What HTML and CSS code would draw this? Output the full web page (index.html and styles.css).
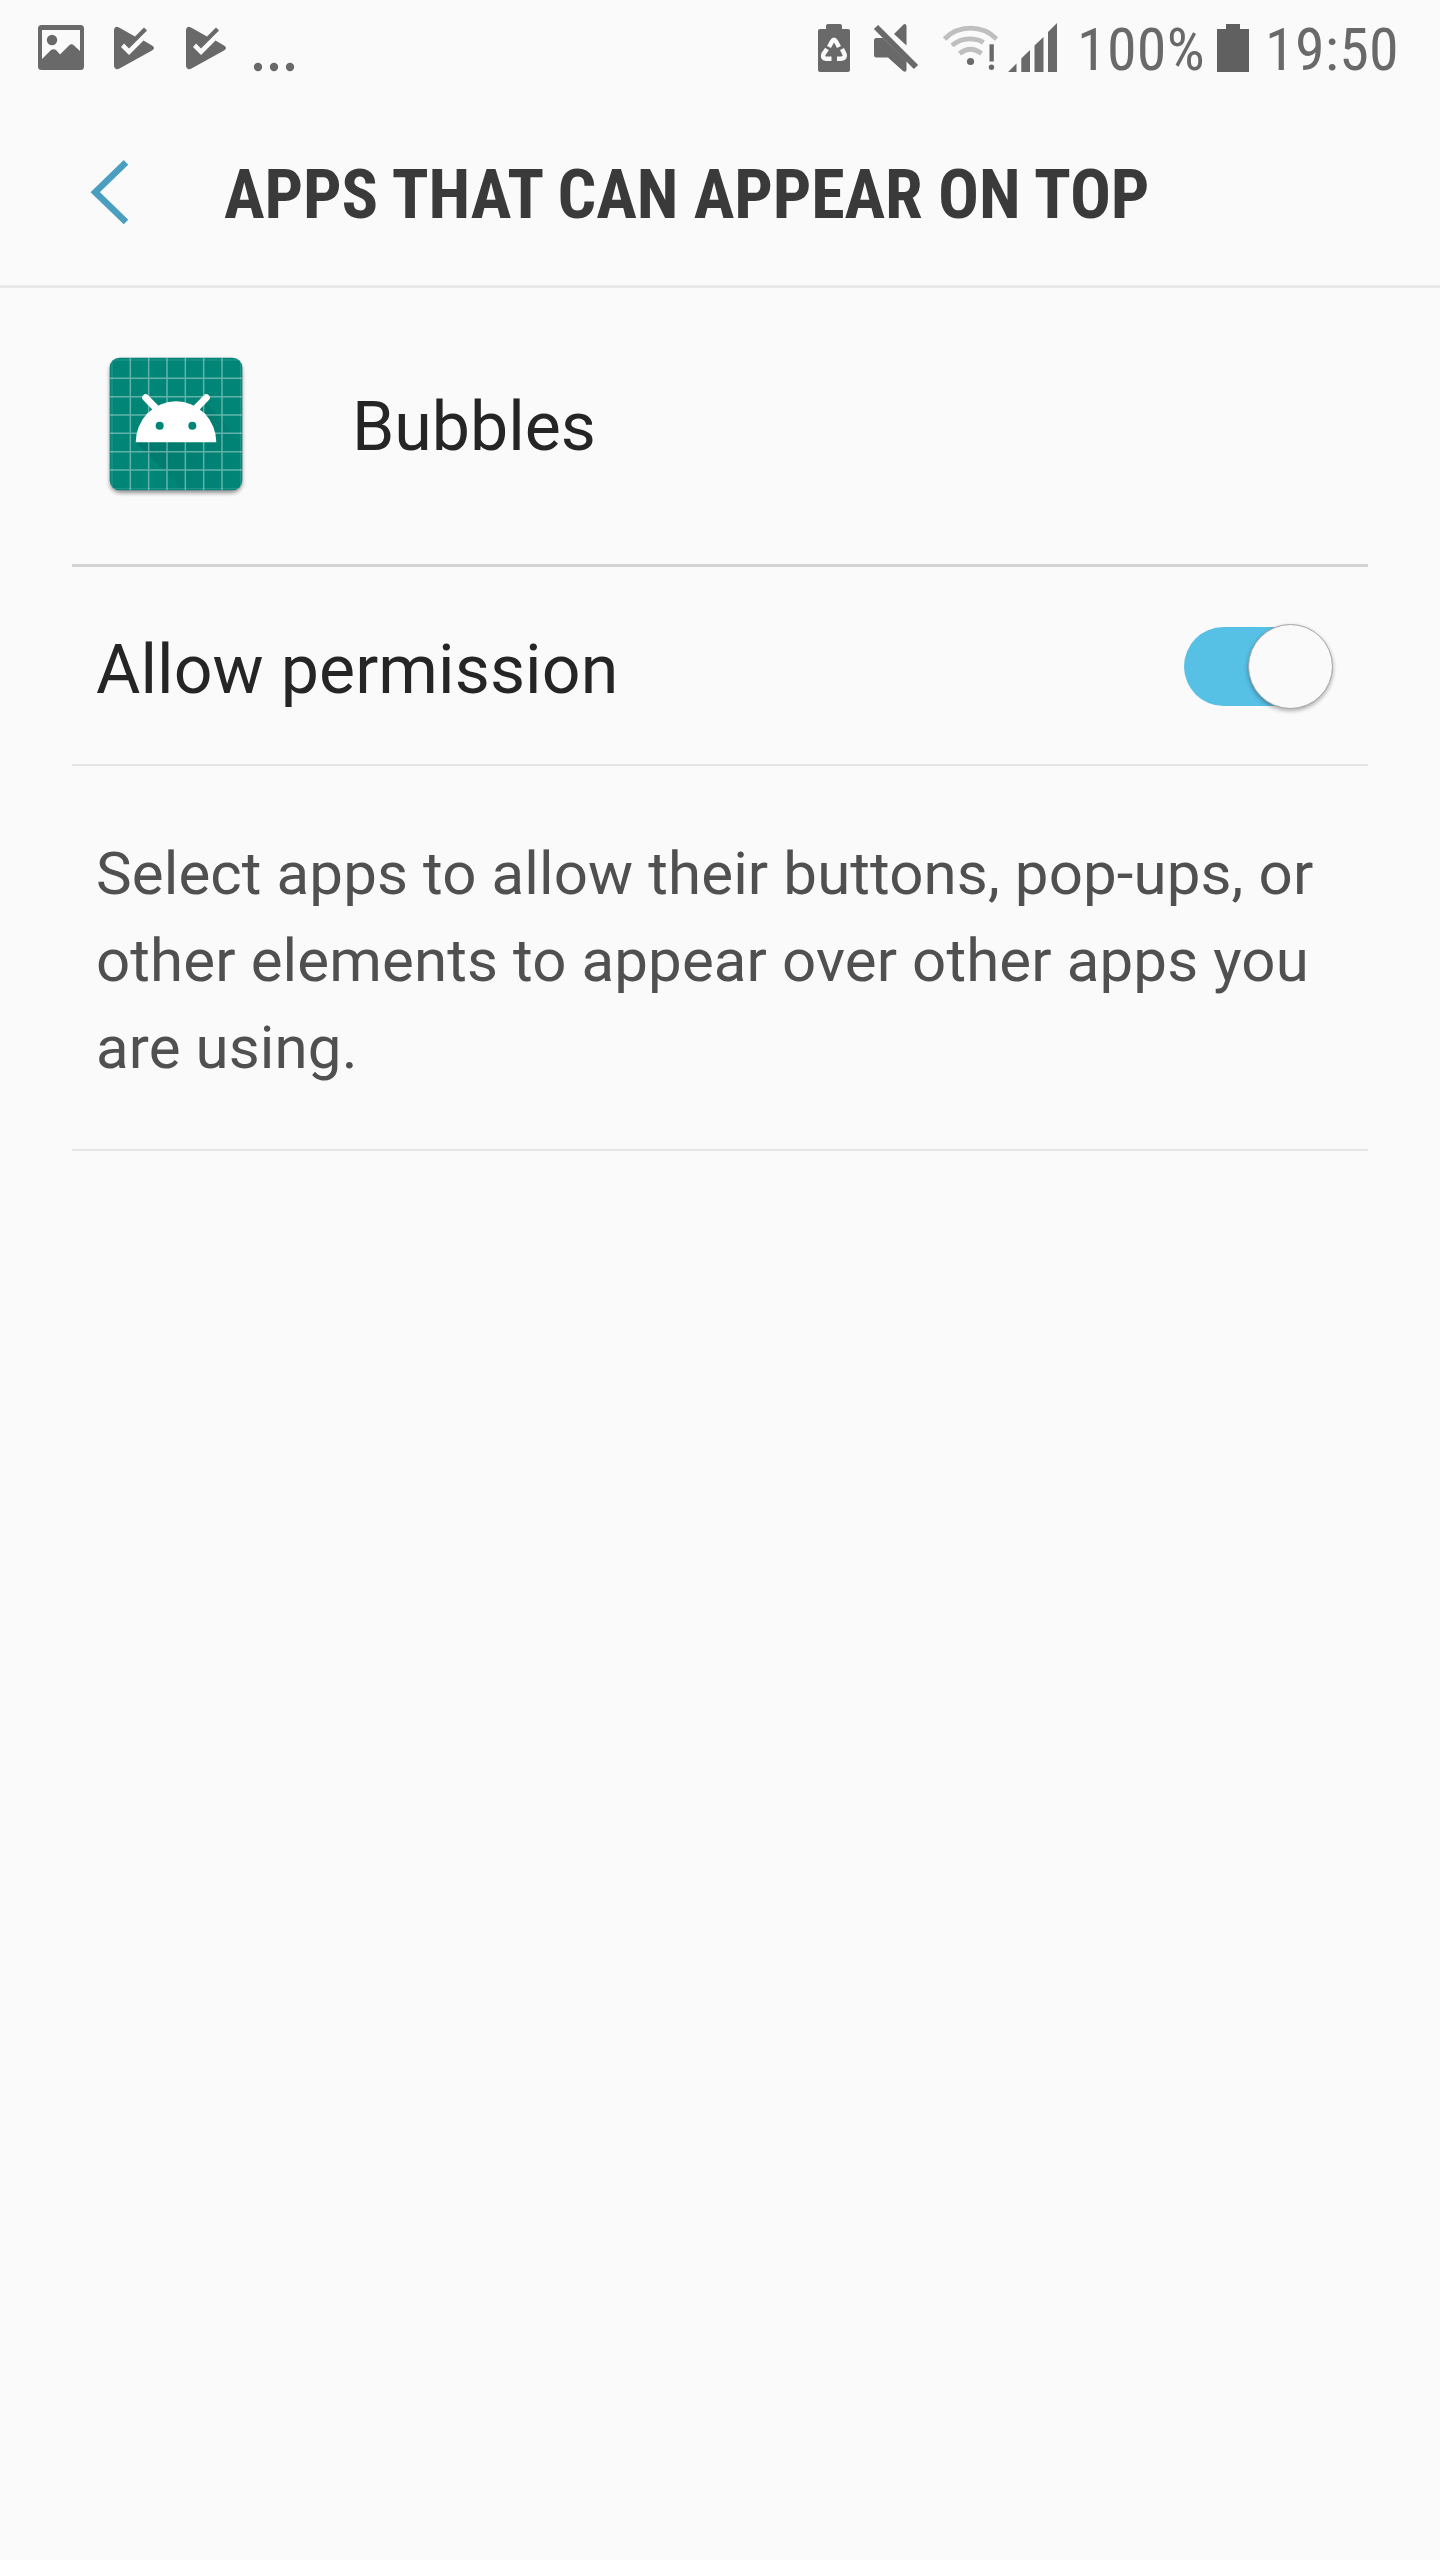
FILE: index.html
```html
<!DOCTYPE html>
<html lang="en">
<head>
<meta charset="utf-8">
<title>Apps that can appear on top</title>
<link rel="stylesheet" href="styles.css">
</head>
<body>
<div class="status-bar">
  <svg class="notifications" width="300" height="96" viewBox="0 0 300 96" fill="#696969">
    <path fill-rule="evenodd" d="M41.5 25H80.500a3.500 3.500 0 0 1 3.500 3.500V66.500a3.500 3.500 0 0 1-3.500 3.500H41.500a3.500 3.500 0 0 1-3.500-3.500V28.500a3.500 3.500 0 0 1 3.500-3.500ZM42 30V59L50.500 50.500Q53.500 48 56.500 50.500L60 54.500L69 45.500Q71.500 43 74 45.500L80 51V30Z"/>
    <circle cx="52" cy="40" r="5.200"/>
    <g id="store">
      <path d="M114 29.500Q115 25.500 119 27.500L135 36.500L144 27.500L147 30.500L129 48.500L124 43.500L121 47L129 55L143.500 40.500L152 45.500Q156 48 152 50.500L119.500 68.500Q115 70.500 114 66.500Z"/>
    </g>
    <use href="#store" x="72"/>
    <circle cx="258" cy="67" r="4.200"/><circle cx="274" cy="67" r="4.200"/><circle cx="290" cy="67" r="4.200"/>
  </svg>
  <div class="system">
    <svg width="261" height="96" viewBox="818 0 261 96" fill="#696969">
      <path d="M826 29V26Q826 24 828 24H840Q842 24 842 26V29H848Q850 29 850 31V70Q850 72 848 72H820Q818 72 818 70V31Q818 29 820 29Z"/>
      <g fill="none" stroke="#fafafa" stroke-width="4.500">
        <path d="M829 47L832 41.500Q834 38 836 41.500L839 47"/>
        <path d="M842 49L844.500 54Q846 58.500 841 58.700H837"/>
        <path d="M831.500 58.700H826Q822 58.500 823.500 54L827 49"/>
      </g>
      <path d="M894 34L903.500 24.500Q906 23 906.500 26V45.500ZM876 38H883L906.500 61V70Q906 73 903 71L888 57.500H876.500Q874 57.500 874 55V41Q874 38 876 38Z"/>
      <path d="M876 27L916 67" stroke="#696969" stroke-width="6"/>
      <g fill="none" stroke="#bfbfbf" stroke-width="4.800">
        <path d="M944.500 39Q955 28.200 970.500 28.200T996.500 39"/>
        <path d="M952 45.500Q960 38.800 969 38.800T983.500 42.500"/>
        <path d="M959.500 53.500Q970.500 45 981.500 53.500"/>
      </g>
      <circle cx="970.500" cy="61.500" r="3.600"/>
      <path d="M989.500 44.300H993.800V61.500H989.500Z"/><circle cx="991.500" cy="67.300" r="2.700"/>
      <path d="M1008 72L1016.500 63.500V72ZM1021.300 72V58.500L1030 50V72ZM1034.500 72V45.500L1043.500 37V72ZM1048 72V32L1057 23V72Z"/>
    </svg>
    <span class="percent">100%</span>
    <svg class="battery" width="32" height="96" viewBox="0 0 32 96" fill="#606060"><path d="M9 29V24H23V29H32V72H0V29Z"/></svg>
    <span class="clock">19:50</span>
  </div>
</div>
<header class="app-bar">
  <svg class="back" width="42" height="68" viewBox="0 0 42 68" fill="none" stroke="#4a9fc0" stroke-width="6.500"><path d="M36 4.300L5.200 34.200L36 64"/></svg>
  <h1>APPS THAT CAN APPEAR ON TOP</h1>
</header>
<main>
  <section class="app">
    <svg class="app-icon" width="170" height="170" viewBox="0 0 510 510">
      <defs>
        <clipPath id="tile"><rect x="59" y="53" width="398" height="398" rx="30"/></clipPath>
        <linearGradient id="shade" x1="140" y1="250" x2="400" y2="450" gradientUnits="userSpaceOnUse"><stop offset="0" stop-opacity=".11"/><stop offset="1" stop-opacity="0"/></linearGradient>
        <filter id="soft" x="-10%" y="-10%" width="120%" height="120%"><feGaussianBlur stdDeviation="6"/></filter>
      </defs>
      <rect x="60" y="60" width="396" height="399" rx="30" opacity=".42" filter="url(#soft)"/>
      <rect x="59" y="53" width="398" height="398" rx="30" fill="#008577"/>
      <g clip-path="url(#tile)">
        <path d="M137 307L281 451H457V310L350 190Z" fill="url(#shade)"/>
        <path d="M121 53V451M176 53V451M231 53V451M286 53V451M341 53V451M396 53V451M59 115H457M59 170H457M59 225H457M59 280H457M59 335H457M59 390H457" stroke="#fff" stroke-width="4.500" opacity=".38"/>
        <path d="M59 60H457M59 446H457M66 53V451M452 53V451" stroke="#fff" stroke-width="3" opacity=".15"/>
      </g>
      <path d="M137 307A121 123 0 0 1 379 307Z" fill="#fff"/>
      <path d="M167 173L200 207M349 173L316 207" stroke="#fff" stroke-width="21" stroke-linecap="round"/>
      <circle cx="209" cy="257" r="12" fill="#008577"/><circle cx="307" cy="257" r="12" fill="#008577"/>
    </svg>
    <span class="label">Bubbles</span>
  </section>
  <section class="permission">
    <span class="label">Allow permission</span>
    <span class="switch"><span class="thumb"></span></span>
  </section>
  <p class="description">Select apps to allow their buttons, pop-ups, or other elements to appear over other apps you are using.</p>
</main>
</body>
</html>
```
FILE: styles.css
```css
* { box-sizing: border-box; }
body { margin: 0; min-height: 2560px; background: #fafafa; font-family: Roboto, sans-serif; color: #252525; }
svg { display: block; flex: none; }
.status-bar { height: 96px; display: flex; justify-content: space-between; color: #696969; }
.system { display: flex; width: 622px; font: 60px/100px "Roboto Condensed", Roboto, sans-serif; white-space: nowrap; }
.percent { width: 140px; margin-left: -2px; letter-spacing: 0.3px; }
.clock { margin-left: 16px; letter-spacing: 0.3px; }
.app-bar { height: 192px; border-bottom: 3px solid #e8e8e8; display: flex; align-items: flex-start; padding: 62px 0 0 90px; }
h1 { margin: 1px 0 0 92px; font: 700 68px/72px "Roboto Condensed", Roboto, sans-serif; letter-spacing: -0.12px; color: #3a3a3a; white-space: nowrap; }
main { padding: 0 72px; }
.app { height: 279px; display: flex; border-bottom: 3px solid #d3d3d3; padding: 52px 0 0 18px; }
.app .label { margin: 47px 0 0 92px; letter-spacing: 0; }
.label { font-size: 68px; line-height: 80px; letter-spacing: 0.1px; white-space: nowrap; }
.permission { height: 199px; display: flex; justify-content: space-between; align-items: flex-start; border-bottom: 2px solid #e5e5e5; padding: 60px 36px 0 24px; }
.permission .label { margin-top: 3px; }
.switch { width: 148px; height: 79px; display: flex; background: linear-gradient(#57c0e5, #57c0e5) 0 0 / 120px 79px no-repeat; border-radius: 40px 0 0 40px; }
.thumb { width: 85px; height: 85px; flex: none; margin: -3px 0 0 64px; border-radius: 50%; background: #fafafa; border: 1px solid #a5a5a5; box-shadow: 0 2px 4px rgba(0, 0, 0, .32); }
.description { margin: 0; height: 385px; padding: 64px 24px 0; border-bottom: 2px solid #e5e5e5; font-size: 60px; line-height: 87px; letter-spacing: 0.12px; color: #505050; }
```
